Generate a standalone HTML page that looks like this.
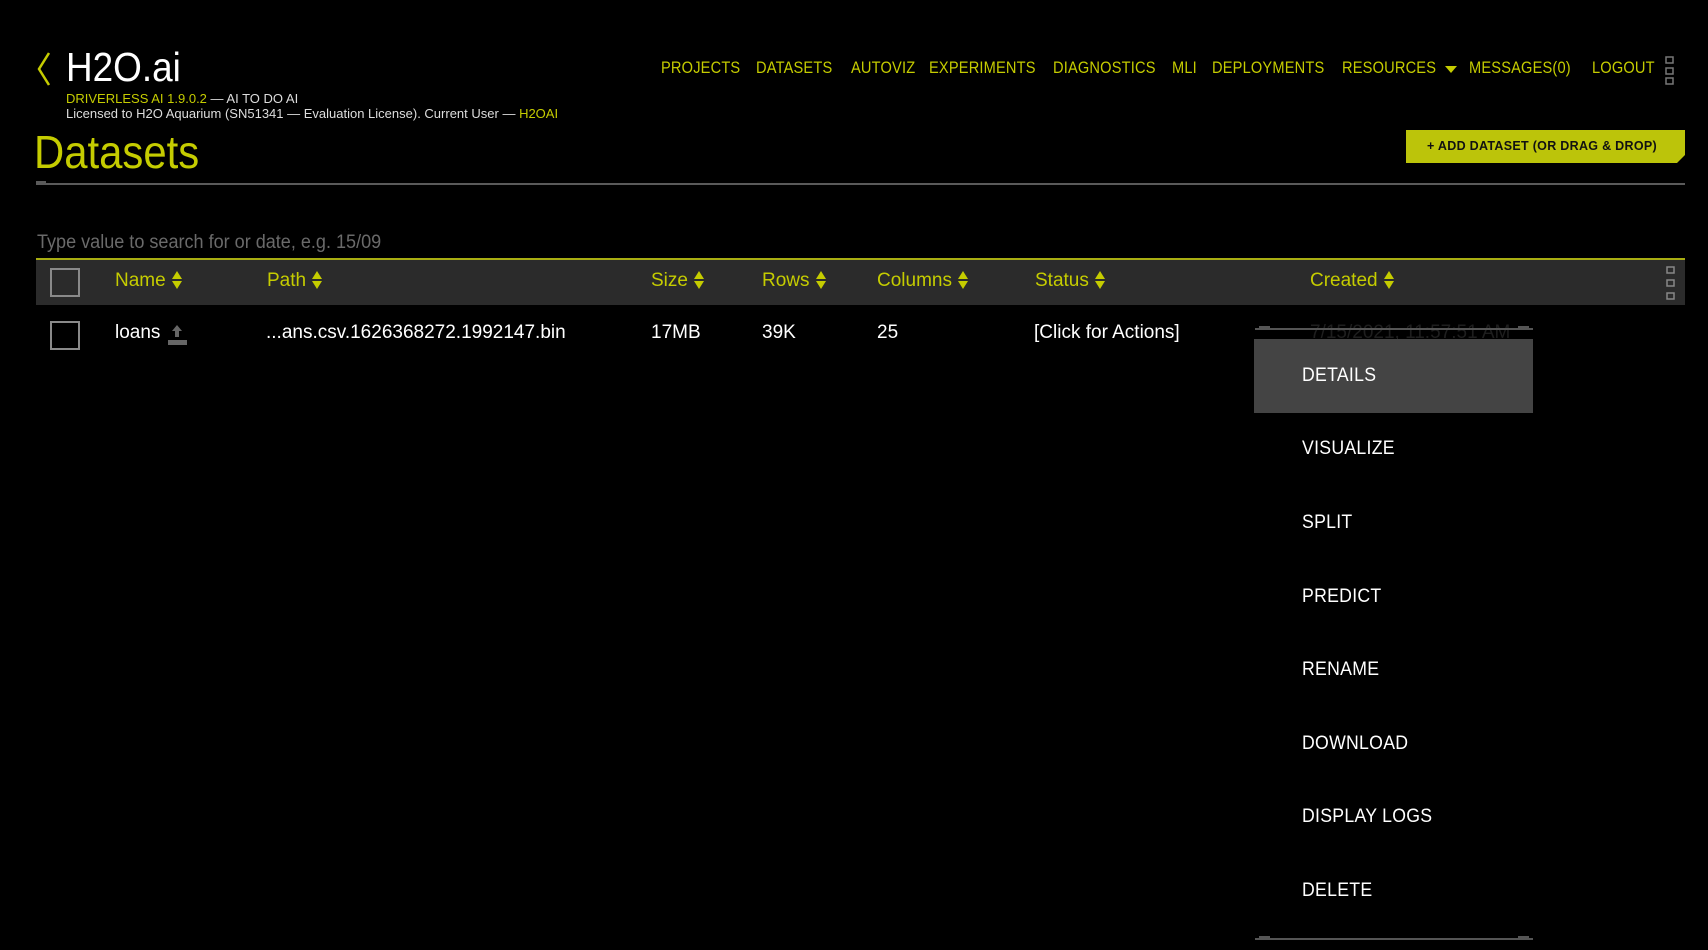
<!DOCTYPE html>
<html><head><meta charset="utf-8"><style>
*{margin:0;padding:0;box-sizing:border-box}
body{width:1708px;height:950px;background:#000;overflow:hidden;position:relative;font-family:"Liberation Sans",sans-serif;color:#fff}
.a{position:absolute;white-space:nowrap}
.y{color:#c5cc00}
.nav{top:58px;font-size:17px;color:#c5cc00;letter-spacing:0.2px;transform:scaleX(.86);transform-origin:0 0}
.th{top:270px;font-size:19px;color:#c5cc00}
.arr{display:inline-block;width:10px;height:18px;vertical-align:-3px;margin-left:6px}
.td{top:322px;font-size:19px;color:#fff}
.mi{left:1302px;font-size:19px;color:#fff;letter-spacing:0.3px;transform:scaleX(.93);transform-origin:0 0}
.cb{position:absolute;width:30px;height:29px;border:2px solid #8a8a8a}
</style></head><body>
<svg class="a" style="left:36px;top:52px" width="16" height="34"><path d="M13 1 L3 17 L13 33" stroke="#c5cc00" stroke-width="2.5" fill="none"/></svg>
<div class="a" style="left:66px;top:44px;font-size:41px;color:#fff;transform:scaleX(.9);transform-origin:0 0">H2O.ai</div>
<div class="a" style="left:66px;top:91px;font-size:13px;color:#ddd"><span class="y">DRIVERLESS AI 1.9.0.2</span> — AI TO DO AI</div>
<div class="a" style="left:66px;top:106px;font-size:13px;color:#ddd">Licensed to H2O Aquarium (SN51341 — Evaluation License). Current User — <span class="y">H2OAI</span></div>
<div class="a" style="left:34px;top:125px;font-size:46px;color:#c5cc00;transform:scaleX(.91);transform-origin:0 0">Datasets</div>

<div class="a nav" style="left:661px">PROJECTS</div>
<div class="a nav" style="left:756px">DATASETS</div>
<div class="a nav" style="left:851px">AUTOVIZ</div>
<div class="a nav" style="left:929px">EXPERIMENTS</div>
<div class="a nav" style="left:1053px">DIAGNOSTICS</div>
<div class="a nav" style="left:1172px">MLI</div>
<div class="a nav" style="left:1212px">DEPLOYMENTS</div>
<div class="a nav" style="left:1342px">RESOURCES</div>
<svg class="a" style="left:1445px;top:66px" width="12" height="7"><path d="M0 0H12L6 7Z" fill="#c5cc00"/></svg>
<div class="a nav" style="left:1469px">MESSAGES(0)</div>
<div class="a nav" style="left:1592px">LOGOUT</div>
<svg class="a" style="left:1665px;top:56px" width="10" height="30"><g fill="none" stroke="#777" stroke-width="1.5"><rect x="1" y="1" width="7" height="6"/><rect x="1" y="12" width="7" height="6"/><rect x="1" y="22" width="7" height="6"/></g></svg>

<svg class="a" style="left:1406px;top:130px" width="280" height="33"><path d="M0 0H279V25L271 33H0Z" fill="#bcc40a"/></svg>
<div class="a" style="left:1406px;top:139px;width:272px;text-align:center;font-size:12.5px;font-weight:bold;color:#111;letter-spacing:0.3px">+ ADD DATASET (OR DRAG &amp; DROP)</div>

<div class="a" style="left:36px;top:183px;width:1649px;height:2px;background:#5a5a5a"></div>
<div class="a" style="left:36px;top:181px;width:10px;height:4px;background:#5a5a5a"></div>

<div class="a" style="left:37px;top:232px;font-size:19px;color:#6a6a6a;transform:scaleX(.95);transform-origin:0 0">Type value to search for or date, e.g. 15/09</div>

<div class="a" style="left:36px;top:258px;width:1649px;height:47px;background:#2b2b2b;border-top:2px solid #a8ad12"></div>
<div class="cb" style="left:50px;top:268px"></div>
<svg width="0" height="0" style="position:absolute"><defs><g id="ar"><path d="M5 0L10 8H0Z M0 10H10L5 18Z" fill="#c5cc00"/></g></defs></svg>
<div class="a th" style="left:115px">Name<svg class="arr"><use href="#ar"/></svg></div>
<div class="a th" style="left:267px">Path<svg class="arr"><use href="#ar"/></svg></div>
<div class="a th" style="left:651px">Size<svg class="arr"><use href="#ar"/></svg></div>
<div class="a th" style="left:762px">Rows<svg class="arr"><use href="#ar"/></svg></div>
<div class="a th" style="left:877px">Columns<svg class="arr"><use href="#ar"/></svg></div>
<div class="a th" style="left:1035px">Status<svg class="arr"><use href="#ar"/></svg></div>
<div class="a th" style="left:1310px">Created<svg class="arr"><use href="#ar"/></svg></div>
<svg class="a" style="left:1666px;top:266px" width="10" height="36"><g fill="none" stroke="#888" stroke-width="1.5"><rect x="1" y="1" width="7" height="6"/><rect x="1" y="14" width="7" height="6"/><rect x="1" y="27" width="7" height="6"/></g></svg>

<div class="cb" style="left:50px;top:321px"></div>
<div class="a td" style="left:115px">loans</div>
<svg class="a" style="left:166px;top:325px" width="22" height="20"><path d="M11 0L16 6H13V12H9V6H6Z" fill="#666"/><rect x="2" y="15" width="19" height="5" fill="#666"/></svg>
<div class="a td" style="left:266px">...ans.csv.1626368272.1992147.bin</div>
<div class="a td" style="left:651px">17MB</div>
<div class="a td" style="left:762px">39K</div>
<div class="a td" style="left:877px">25</div>
<div class="a td" style="left:1034px">[Click for Actions]</div>
<div class="a" style="left:1310px;top:322px;font-size:19px;color:#1e1e1e">7/15/2021, 11:57:51 AM</div>

<svg class="a" style="left:1252px;top:324px" width="284" height="620"><g fill="#555"><path d="M3 4H281V6H3Z"/><path d="M7 2H18V6H7Z"/><path d="M266 2H277V6H266Z"/><path d="M3 614H281V616H3Z"/><path d="M7 612H18V616H7Z"/><path d="M266 612H277V616H266Z"/></g></svg>
<div class="a" style="left:1254px;top:339px;width:279px;height:74px;background:#444"></div>
<div class="a mi" style="top:365px">DETAILS</div>
<div class="a mi" style="top:438px">VISUALIZE</div>
<div class="a mi" style="top:512px">SPLIT</div>
<div class="a mi" style="top:586px">PREDICT</div>
<div class="a mi" style="top:659px">RENAME</div>
<div class="a mi" style="top:733px">DOWNLOAD</div>
<div class="a mi" style="top:806px">DISPLAY LOGS</div>
<div class="a mi" style="top:880px">DELETE</div>
</body></html>
